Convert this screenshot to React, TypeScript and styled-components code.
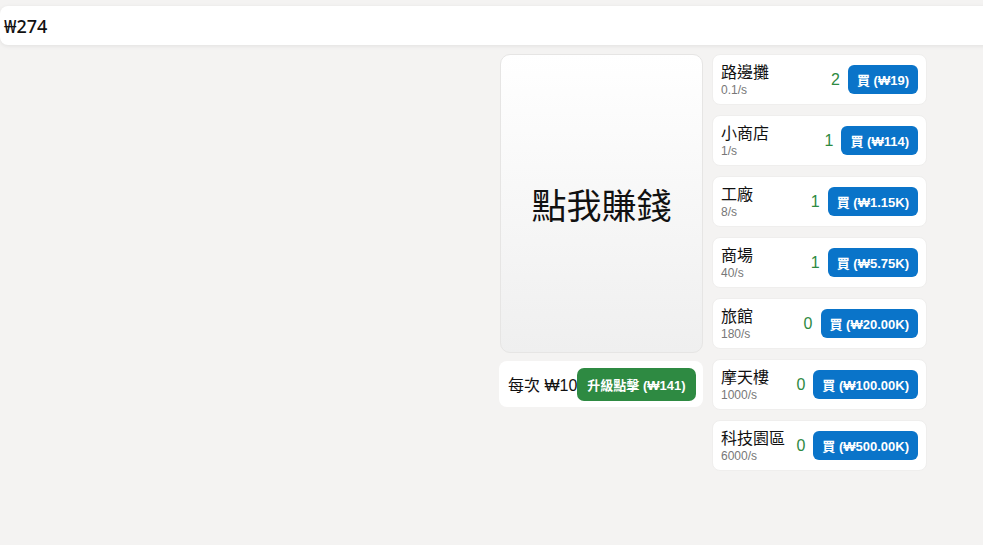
import React, { useState } from 'react';
import styled, { createGlobalStyle } from 'styled-components';

interface Building {
  name: string;
  rate: string;
  count: number;
  price: string;
}

const buildings: Building[] = [
  { name: '路邊攤', rate: '0.1/s', count: 2, price: '₩19' },
  { name: '小商店', rate: '1/s', count: 1, price: '₩114' },
  { name: '工廠', rate: '8/s', count: 1, price: '₩1.15K' },
  { name: '商場', rate: '40/s', count: 1, price: '₩5.75K' },
  { name: '旅館', rate: '180/s', count: 0, price: '₩20.00K' },
  { name: '摩天樓', rate: '1000/s', count: 0, price: '₩100.00K' },
  { name: '科技園區', rate: '6000/s', count: 0, price: '₩500.00K' },
];

const GlobalStyle = createGlobalStyle`
  body {
    margin: 0;
    background: #f4f3f2;
    font-family: "Liberation Sans", "Noto Sans CJK TC", sans-serif;
    color: #111;
    overflow: hidden;
  }
`;

const Page = styled.div`
  padding-top: 6px;
  min-height: 545px;
  box-sizing: border-box;
`;

const TopBar = styled.div`
  height: 39px;
  margin-right: -12px;
  background: #fff;
  border-radius: 8px;
  box-shadow: 0 1px 4px rgba(0, 0, 0, 0.08);
  display: flex;
  align-items: center;
  padding-left: 4px;
  font-family: "Noto Sans", "Noto Sans CJK TC", sans-serif;
  font-size: 18px;
  font-weight: 500;
`;

const Main = styled.div`
  display: flex;
  justify-content: flex-end;
  align-items: flex-start;
  gap: 9px;
  padding: 9px 56px 0 0;
`;

const ClickColumn = styled.div`
  width: 204px;
  display: flex;
  flex-direction: column;
  gap: 8px;
`;

const ClickButton = styled.button`
  width: 203px;
  margin-left: 1px;
  height: 299px;
  border: 1px solid #e6e5e4;
  border-radius: 10px;
  background: linear-gradient(#ffffff, #efefef);
  font-family: "Noto Sans", "Noto Sans CJK TC", sans-serif;
  font-size: 35px;
  color: #111;
  cursor: pointer;
`;

const UpgradeRow = styled.div`
  height: 46px;
  background: #fff;
  border-radius: 8px;
  display: flex;
  align-items: center;
  padding: 0 8px 0 9px;
  font-size: 16px;
  white-space: nowrap;
`;

const UpgradeButton = styled.button`
  height: 33px;
  padding: 0 10px;
  border: none;
  border-radius: 7px;
  background: #2e8a42;
  color: #fff;
  font-family: inherit;
  font-size: 13px;
  font-weight: 700;
  cursor: pointer;
`;

const Shop = styled.div`
  width: 215px;
  display: flex;
  flex-direction: column;
  gap: 10px;
`;

const Item = styled.div`
  height: 51px;
  box-sizing: border-box;
  background: #fff;
  border-radius: 8px;
  border: 1px solid #efeeed;
  display: flex;
  align-items: center;
  padding: 0 8px;
`;

const Info = styled.div`
  flex: 1;
  display: flex;
  flex-direction: column;
`;

const Name = styled.div`
  font-size: 16px;
  line-height: 20px;
`;

const Rate = styled.div`
  font-size: 12px;
  line-height: 14px;
  color: #777;
`;

const Count = styled.span`
  color: #2e8a42;
  font-size: 16px;
  margin-right: 8px;
`;

const BuyButton = styled.button`
  height: 29px;
  padding: 0 9px;
  border: none;
  border-radius: 6px;
  background: #0a74c9;
  color: #fff;
  font-family: inherit;
  font-size: 13px;
  font-weight: 700;
  cursor: pointer;
  white-space: nowrap;
`;

const App: React.FC = () => {
  const [money] = useState<number>(274);

  return (
    <Page>
      <GlobalStyle />
      <TopBar>₩{money}</TopBar>
      <Main>
        <ClickColumn>
          <ClickButton>點我賺錢</ClickButton>
          <UpgradeRow>
            每次 ₩10
            <UpgradeButton>升級點擊 (₩141)</UpgradeButton>
          </UpgradeRow>
        </ClickColumn>
        <Shop>
          {buildings.map((b) => (
            <Item key={b.name}>
              <Info>
                <Name>{b.name}</Name>
                <Rate>{b.rate}</Rate>
              </Info>
              <Count>{b.count}</Count>
              <BuyButton>買 ({b.price})</BuyButton>
            </Item>
          ))}
        </Shop>
      </Main>
    </Page>
  );
};

export default App;
